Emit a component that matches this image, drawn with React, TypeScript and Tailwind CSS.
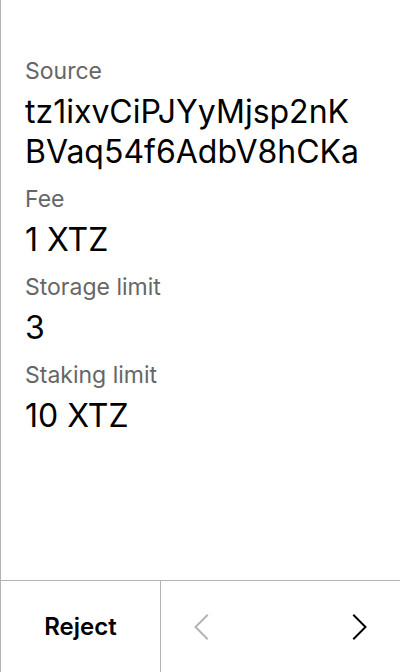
const fields = [
  { label: "Source", value: "tz1ixvCiPJYyMjsp2nKBVaq54f6AdbV8hCKa" },
  { label: "Fee", value: "1 XTZ" },
  { label: "Storage limit", value: "3" },
  { label: "Staking limit", value: "10 XTZ" },
]

const Chevron = ({ dir, className }: { dir: "left" | "right"; className: string }) => (
  <svg width="16" height="26" viewBox="0 0 16 26" fill="none" className={className}>
    <polyline
      points={dir === "left" ? "14,1.5 2.5,13 14,24.5" : "2,1.5 13.5,13 2,24.5"}
      stroke="currentColor"
      strokeWidth="2"
      strokeLinecap="square"
    />
  </svg>
)

const App = () => {
  return (
    <div
      className="flex h-[672px] w-[400px] flex-col border-l border-[#b3b3b3] bg-white"
      style={{ fontFamily: "Inter, 'Noto Sans', sans-serif" }}
    >
      <div className="flex flex-1 flex-col gap-[11px] pl-6 pt-[55px]">
        {fields.map((f) => (
          <div key={f.label} className="flex flex-col gap-[5px]">
            <div className="text-[23px] leading-[32px] text-[#666666]">{f.label}</div>
            <div className="w-[342px] break-all text-[32px] leading-[40px] text-black">{f.value}</div>
          </div>
        ))}
      </div>
      <div className="flex h-[92px] border-t border-[#b3b3b3]">
        <button className="flex w-[160px] items-center justify-center border-r border-[#b3b3b3] text-2xl font-semibold text-black">
          Reject
        </button>
        <div className="flex flex-1 items-center justify-between px-8">
          <Chevron dir="left" className="text-[#b3b3b3]" />
          <Chevron dir="right" className="text-black" />
        </div>
      </div>
    </div>
  )
}

export default App
